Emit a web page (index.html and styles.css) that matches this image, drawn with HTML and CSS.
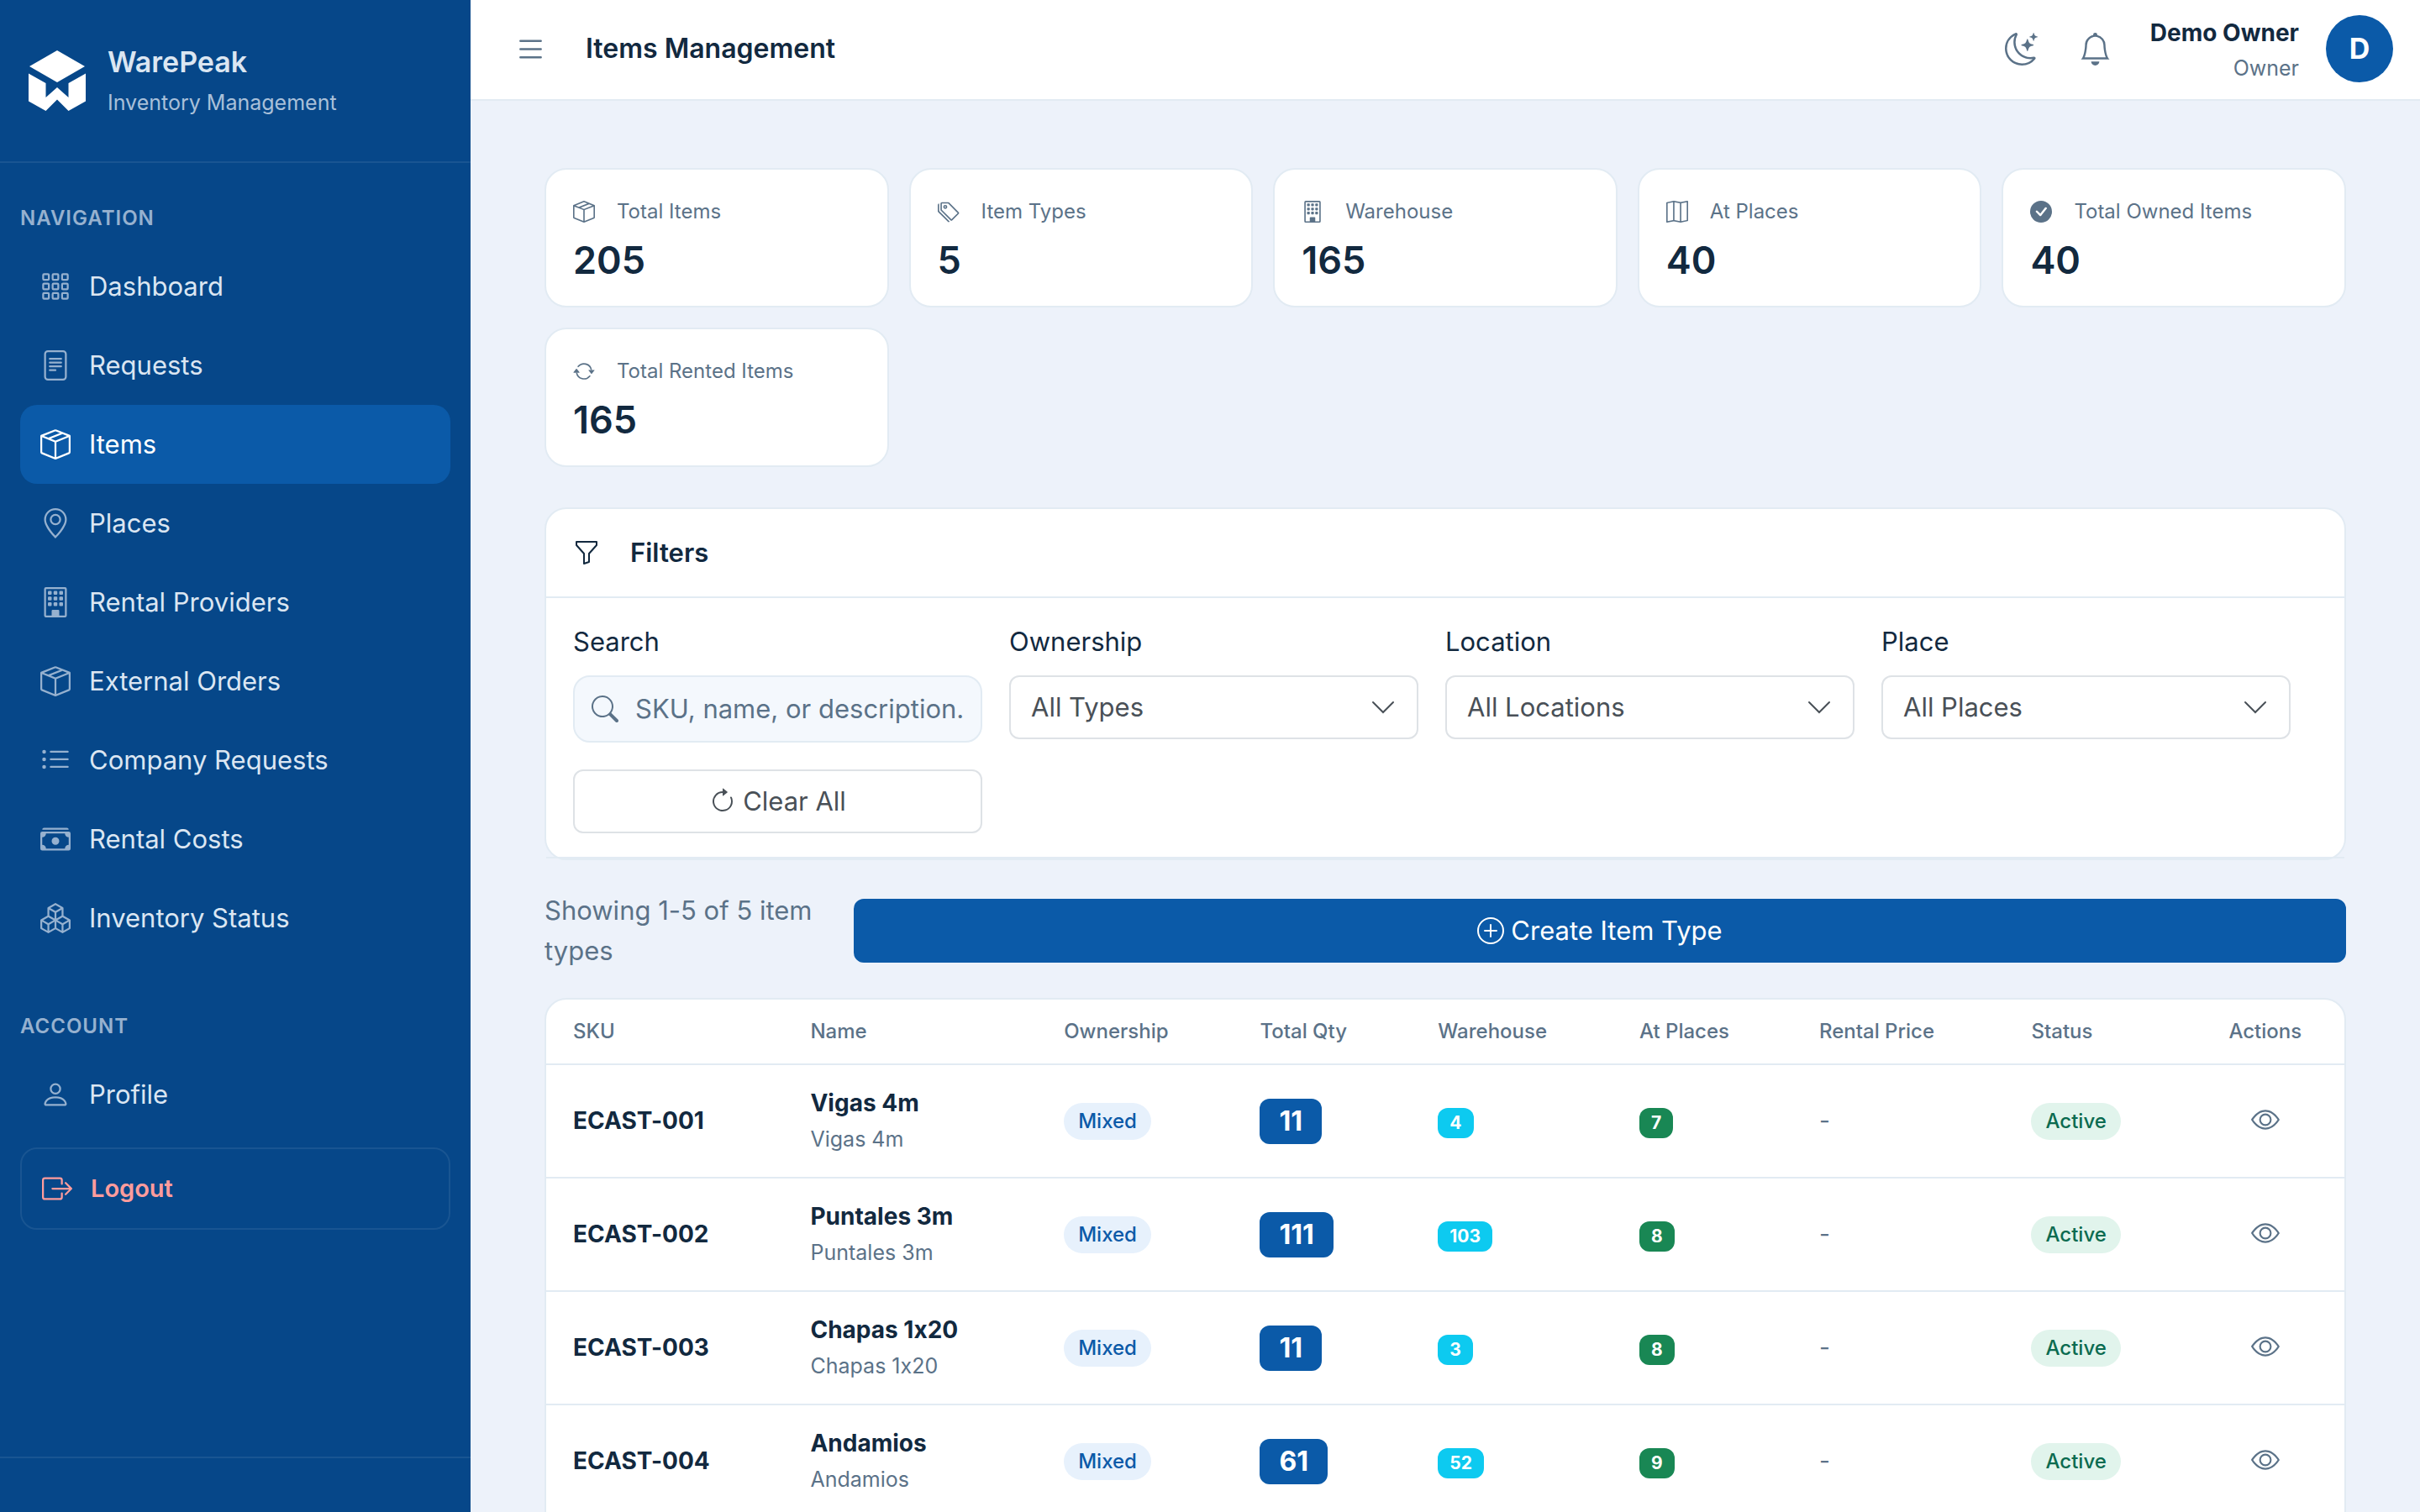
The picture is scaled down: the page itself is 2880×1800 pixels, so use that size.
FILE: index.html
```html
<!DOCTYPE html>
<html lang="en">
<head>
    <meta charset="UTF-8">
    <meta name="viewport" content="width=device-width, initial-scale=1">
    <title>WarePeak - Items Management</title>
    <link rel="stylesheet" href="styles.css">
</head>
<body>
    <!-- Icon sprite -->
    <svg class="sprite" aria-hidden="true">
        <symbol id="grid" viewBox="0 0 16 16">
            <g fill="none" stroke="currentColor">
                <rect x="1.5" y="1.5" width="3" height="3" rx=".5"/><rect x="6.5" y="1.5" width="3" height="3" rx=".5"/><rect x="11.5" y="1.5" width="3" height="3" rx=".5"/>
                <rect x="1.5" y="6.5" width="3" height="3" rx=".5"/><rect x="6.5" y="6.5" width="3" height="3" rx=".5"/><rect x="11.5" y="6.5" width="3" height="3" rx=".5"/>
                <rect x="1.5" y="11.5" width="3" height="3" rx=".5"/><rect x="6.5" y="11.5" width="3" height="3" rx=".5"/><rect x="11.5" y="11.5" width="3" height="3" rx=".5"/>
            </g>
        </symbol>
        <symbol id="file-text" viewBox="0 0 16 16">
            <path d="M5 4a.5.5 0 0 0 0 1h6a.5.5 0 0 0 0-1zm-.5 2.5A.5.5 0 0 1 5 6h6a.5.5 0 0 1 0 1H5a.5.5 0 0 1-.5-.5M5 8a.5.5 0 0 0 0 1h6a.5.5 0 0 0 0-1zm0 2a.5.5 0 0 0 0 1h3a.5.5 0 0 0 0-1z"/>
            <path d="M2 2a2 2 0 0 1 2-2h8a2 2 0 0 1 2 2v12a2 2 0 0 1-2 2H4a2 2 0 0 1-2-2zm10-1H4a1 1 0 0 0-1 1v12a1 1 0 0 0 1 1h8a1 1 0 0 0 1-1V2a1 1 0 0 0-1-1"/>
        </symbol>
        <symbol id="box" viewBox="0 0 16 16">
            <path d="M8.186 1.113a.5.5 0 0 0-.372 0L1.846 3.5l2.404.961L10.404 2zm3.564 1.426L5.596 5 8 5.961 14.154 3.5zm3.25 1.7-6.5 2.6v7.922l6.5-2.6V4.24zM7.5 14.762V6.838L1 4.239v7.923zM7.443.184a1.5 1.5 0 0 1 1.114 0l7.129 2.852A.5.5 0 0 1 16 3.5v8.662a1 1 0 0 1-.629.928l-7.185 2.874a.5.5 0 0 1-.372 0L.63 13.09a1 1 0 0 1-.63-.928V3.5a.5.5 0 0 1 .314-.464z"/>
        </symbol>
        <symbol id="geo" viewBox="0 0 16 16">
            <path d="M12.166 8.94c-.524 1.062-1.234 2.12-1.96 3.07A32 32 0 0 1 8 14.58a32 32 0 0 1-2.206-2.57c-.726-.95-1.436-2.008-1.96-3.07C3.304 7.867 3 6.862 3 6a5 5 0 0 1 10 0c0 .862-.305 1.867-.834 2.94M8 16s6-5.686 6-10A6 6 0 0 0 2 6c0 4.314 6 10 6 10"/>
            <path d="M8 8a2 2 0 1 1 0-4 2 2 0 0 1 0 4m0 1a3 3 0 1 0 0-6 3 3 0 0 0 0 6"/>
        </symbol>
        <symbol id="building" viewBox="0 0 16 16">
            <path d="M2 1a1 1 0 0 1 1-1h10a1 1 0 0 1 1 1v14a1 1 0 0 1-1 1H3a1 1 0 0 1-1-1zm11 0H3v14h3v-2.5a.5.5 0 0 1 .5-.5h3a.5.5 0 0 1 .5.5V15h3z"/>
            <rect x="4" y="2" width="2" height="2" rx=".5"/><rect x="7" y="2" width="2" height="2" rx=".5"/><rect x="10" y="2" width="2" height="2" rx=".5"/>
            <rect x="4" y="5" width="2" height="2" rx=".5"/><rect x="7" y="5" width="2" height="2" rx=".5"/><rect x="10" y="5" width="2" height="2" rx=".5"/>
            <rect x="4" y="8" width="2" height="2" rx=".5"/><rect x="7" y="8" width="2" height="2" rx=".5"/><rect x="10" y="8" width="2" height="2" rx=".5"/>
        </symbol>
        <symbol id="list-ul" viewBox="0 0 16 16">
            <path d="M5 11.5a.5.5 0 0 1 .5-.5h9a.5.5 0 0 1 0 1h-9a.5.5 0 0 1-.5-.5m0-4a.5.5 0 0 1 .5-.5h9a.5.5 0 0 1 0 1h-9a.5.5 0 0 1-.5-.5m0-4a.5.5 0 0 1 .5-.5h9a.5.5 0 0 1 0 1h-9a.5.5 0 0 1-.5-.5m-3 1a1 1 0 1 0 0-2 1 1 0 0 0 0 2m0 4a1 1 0 1 0 0-2 1 1 0 0 0 0 2m0 4a1 1 0 1 0 0-2 1 1 0 0 0 0 2"/>
        </symbol>
        <symbol id="cash" viewBox="0 0 16 16">
            <path d="M1 3a1 1 0 0 1 1-1h12a1 1 0 0 1 1 1zm7 8a2 2 0 1 0 0-4 2 2 0 0 0 0 4"/>
            <path d="M0 5a1 1 0 0 1 1-1h14a1 1 0 0 1 1 1v8a1 1 0 0 1-1 1H1a1 1 0 0 1-1-1zm3 0a2 2 0 0 1-2 2v4a2 2 0 0 1 2 2h10a2 2 0 0 1 2-2V7a2 2 0 0 1-2-2z"/>
        </symbol>
        <symbol id="boxes" viewBox="0 0 16 16">
            <path d="M7.752.066a.5.5 0 0 1 .496 0l3.75 2.143a.5.5 0 0 1 .252.434v3.995l3.498 2A.5.5 0 0 1 16 9.07v4.286a.5.5 0 0 1-.252.434l-3.75 2.143a.5.5 0 0 1-.496 0l-3.502-2-3.502 2.001a.5.5 0 0 1-.496 0l-3.75-2.143A.5.5 0 0 1 0 13.357V9.071a.5.5 0 0 1 .252-.434L3.75 6.638V2.643a.5.5 0 0 1 .252-.434zM4.25 7.504 1.508 9.071l2.742 1.567 2.742-1.567zM7.5 9.933l-2.75 1.571v3.134l2.75-1.571zm1 3.134 2.75 1.571v-3.134L8.5 9.933zm.508-3.996 2.742 1.567 2.742-1.567-2.742-1.567zm2.242-2.433V3.504L8.5 5.076V8.21zM7.5 8.21V5.076L4.75 3.504v3.134zM5.258 2.643 8 4.21l2.742-1.567L8 1.076zM15 9.933l-2.75 1.571v3.134L15 13.067zM3.75 14.638v-3.134L1 9.933v3.134z"/>
        </symbol>
        <symbol id="person" viewBox="0 0 16 16">
            <path d="M8 8a3 3 0 1 0 0-6 3 3 0 0 0 0 6m2-3a2 2 0 1 1-4 0 2 2 0 0 1 4 0m4 8c0 1-1 1-1 1H3s-1 0-1-1 1-4 6-4 6 3 6 4m-1-.004c-.001-.246-.154-.986-.832-1.664C11.516 10.68 10.289 10 8 10s-3.516.68-4.168 1.332c-.678.678-.83 1.418-.832 1.664z"/>
        </symbol>
        <symbol id="logout" viewBox="0 0 16 16">
            <path d="M10 12.5a.5.5 0 0 1-.5.5h-8a.5.5 0 0 1-.5-.5v-9a.5.5 0 0 1 .5-.5h8a.5.5 0 0 1 .5.5v2a.5.5 0 0 0 1 0v-2A1.5 1.5 0 0 0 9.5 2h-8A1.5 1.5 0 0 0 0 3.5v9A1.5 1.5 0 0 0 1.5 14h8a1.5 1.5 0 0 0 1.5-1.5v-2a.5.5 0 0 0-1 0z"/>
            <path d="M15.854 8.354a.5.5 0 0 0 0-.708l-3-3a.5.5 0 0 0-.708.708L14.293 7.5H5.5a.5.5 0 0 0 0 1h8.793l-2.147 2.146a.5.5 0 0 0 .708.708z"/>
        </symbol>
        <symbol id="list" viewBox="0 0 16 16">
            <path d="M2.5 12a.5.5 0 0 1 .5-.5h10a.5.5 0 0 1 0 1H3a.5.5 0 0 1-.5-.5m0-4a.5.5 0 0 1 .5-.5h10a.5.5 0 0 1 0 1H3a.5.5 0 0 1-.5-.5m0-4a.5.5 0 0 1 .5-.5h10a.5.5 0 0 1 0 1H3a.5.5 0 0 1-.5-.5"/>
        </symbol>
        <symbol id="moon" viewBox="0 0 16 16">
            <path d="M6 .278a.77.77 0 0 1 .08.858 7.2 7.2 0 0 0-.878 3.46c0 4.021 3.278 7.277 7.318 7.277q.792-.001 1.533-.16a.79.79 0 0 1 .81.316.73.73 0 0 1-.031.893A8.35 8.35 0 0 1 8.344 16C3.734 16 0 12.286 0 7.71 0 4.266 2.114 1.312 5.124.06A.75.75 0 0 1 6 .278M4.858 1.311A7.27 7.27 0 0 0 1.025 7.71c0 4.02 3.279 7.276 7.319 7.276a7.32 7.32 0 0 0 5.205-2.162q-.506.063-1.029.063c-4.61 0-8.343-3.714-8.343-8.29 0-1.167.242-2.278.681-3.286"/>
            <path d="M10.794 3.148a.217.217 0 0 1 .412 0l.387 1.162c.173.518.579.924 1.097 1.097l1.162.387a.217.217 0 0 1 0 .412l-1.162.387a1.73 1.73 0 0 0-1.097 1.097l-.387 1.162a.217.217 0 0 1-.412 0l-.387-1.162A1.73 1.73 0 0 0 9.31 6.593l-1.162-.387a.217.217 0 0 1 0-.412l1.162-.387a1.73 1.73 0 0 0 1.097-1.097zM13.863.099a.145.145 0 0 1 .274 0l.258.774c.115.346.386.617.732.732l.774.258a.145.145 0 0 1 0 .274l-.774.258a1.16 1.16 0 0 0-.732.732l-.258.774a.145.145 0 0 1-.274 0l-.258-.774a1.16 1.16 0 0 0-.732-.732l-.774-.258a.145.145 0 0 1 0-.274l.774-.258c.346-.115.617-.386.732-.732z"/>
        </symbol>
        <symbol id="bell" viewBox="0 0 16 16">
            <path d="M8 16a2 2 0 0 0 2-2H6a2 2 0 0 0 2 2M8 1.918l-.797.161A4 4 0 0 0 4 6c0 .628-.134 2.197-.459 3.742-.16.767-.376 1.566-.663 2.258h10.244c-.287-.692-.502-1.49-.663-2.258C12.134 8.197 12 6.628 12 6a4 4 0 0 0-3.203-3.92zM14.22 12c.223.447.481.801.78 1H1c.299-.199.557-.553.78-1C2.68 10.2 3 6.88 3 6c0-2.42 1.72-4.44 4.005-4.901a1 1 0 1 1 1.99 0A5 5 0 0 1 13 6c0 .88.32 4.2 1.22 6"/>
        </symbol>
        <symbol id="tags" viewBox="0 0 16 16">
            <path d="M3 2v4.586l7 7L14.586 9l-7-7zM2 2a1 1 0 0 1 1-1h4.586a1 1 0 0 1 .707.293l7 7a1 1 0 0 1 0 1.414l-4.586 4.586a1 1 0 0 1-1.414 0l-7-7A1 1 0 0 1 2 6.586z"/>
            <path d="M5.5 5a.5.5 0 1 1 0-1 .5.5 0 0 1 0 1m0 1a1.5 1.5 0 1 0 0-3 1.5 1.5 0 0 0 0 3M1 7.086a1 1 0 0 0 .293.707L8.75 15.25l-.043.043a1 1 0 0 1-1.414 0l-7-7A1 1 0 0 1 0 7.586V3a1 1 0 0 1 1-1z"/>
        </symbol>
        <symbol id="map" viewBox="0 0 16 16">
            <path d="M15.817.113A.5.5 0 0 1 16 .5v14a.5.5 0 0 1-.402.49l-5 1a.5.5 0 0 1-.196 0L5.5 15.01l-4.902.98A.5.5 0 0 1 0 15.5v-14a.5.5 0 0 1 .402-.49l5-1a.5.5 0 0 1 .196 0L10.5.99l4.902-.98a.5.5 0 0 1 .415.103M10 1.91l-4-.8v12.98l4 .8zm1 12.98 4-.8V1.11l-4 .8zm-6-.8V1.11l-4 .8v12.98z"/>
        </symbol>
        <symbol id="check" viewBox="0 0 16 16">
            <path d="M16 8A8 8 0 1 1 0 8a8 8 0 0 1 16 0m-3.97-3.03a.75.75 0 0 0-1.08.022L7.477 9.417 5.384 7.323a.75.75 0 0 0-1.06 1.06L6.97 11.03a.75.75 0 0 0 1.079-.02l3.992-4.99a.75.75 0 0 0-.01-1.05z"/>
        </symbol>
        <symbol id="repeat" viewBox="0 0 16 16">
            <path d="M11.534 7h3.932a.25.25 0 0 1 .192.41l-1.966 2.36a.25.25 0 0 1-.384 0l-1.966-2.36a.25.25 0 0 1 .192-.41m-11 2h3.932a.25.25 0 0 0 .192-.41L2.692 6.23a.25.25 0 0 0-.384 0L.342 8.59A.25.25 0 0 0 .534 9"/>
            <path d="M8 3c-1.552 0-2.94.707-3.857 1.818a.5.5 0 1 1-.771-.636A6.002 6.002 0 0 1 13.917 7H12.9A5 5 0 0 0 8 3M3.1 9a5.002 5.002 0 0 0 8.757 2.182.5.5 0 1 1 .771.636A6.002 6.002 0 0 1 2.083 9z"/>
        </symbol>
        <symbol id="funnel" viewBox="0 0 16 16">
            <path d="M1.5 1.5A.5.5 0 0 1 2 1h12a.5.5 0 0 1 .5.5v2a.5.5 0 0 1-.128.334L10 8.692V13.5a.5.5 0 0 1-.342.474l-3 1A.5.5 0 0 1 6 14.5V8.692L1.628 3.834A.5.5 0 0 1 1.5 3.5zm1 .5v1.308l4.372 4.858A.5.5 0 0 1 7 8.5v5.306l2-.666V8.5a.5.5 0 0 1 .128-.334L13.5 3.308V2z"/>
        </symbol>
        <symbol id="search-icon" viewBox="0 0 16 16">
            <path d="M11.742 10.344a6.5 6.5 0 1 0-1.397 1.398h-.001q.044.06.098.115l3.85 3.85a1 1 0 0 0 1.415-1.414l-3.85-3.85a1 1 0 0 0-.115-.1zM12 6.5a5.5 5.5 0 1 1-11 0 5.5 5.5 0 0 1 11 0"/>
        </symbol>
        <symbol id="reset" viewBox="0 0 16 16">
            <path d="M8 3a5 5 0 1 0 4.546 2.914.5.5 0 0 1 .908-.417A6 6 0 1 1 8 2z"/>
            <path d="M8 4.466V.534a.25.25 0 0 1 .41-.192l2.36 1.966c.12.1.12.284 0 .384L8.41 4.658A.25.25 0 0 1 8 4.466"/>
        </symbol>
        <symbol id="plus" viewBox="0 0 16 16">
            <path d="M8 15A7 7 0 1 1 8 1a7 7 0 0 1 0 14m0 1A8 8 0 1 0 8 0a8 8 0 0 0 0 16"/>
            <path d="M8 4a.5.5 0 0 1 .5.5v3h3a.5.5 0 0 1 0 1h-3v3a.5.5 0 0 1-1 0v-3h-3a.5.5 0 0 1 0-1h3v-3A.5.5 0 0 1 8 4"/>
        </symbol>
        <symbol id="eye" viewBox="0 0 16 16">
            <path d="M16 8s-3-5.5-8-5.5S0 8 0 8s3 5.5 8 5.5S16 8 16 8M1.173 8a13 13 0 0 1 1.66-2.043C4.12 4.668 5.88 3.5 8 3.5s3.879 1.168 5.168 2.457A13 13 0 0 1 14.828 8q-.086.13-.195.288c-.335.48-.83 1.12-1.465 1.755C11.879 11.332 10.119 12.5 8 12.5s-3.879-1.168-5.168-2.457A13 13 0 0 1 1.172 8z"/>
            <path d="M8 5.5a2.5 2.5 0 1 0 0 5 2.5 2.5 0 0 0 0-5M4.5 8a3.5 3.5 0 1 1 7 0 3.5 3.5 0 0 1-7 0"/>
        </symbol>
    </svg>

    <div class="layout">
        <aside class="sidebar">
            <div class="brand">
                <svg class="brand-logo" viewBox="0 0 68 72" aria-hidden="true">
                    <path d="M34 0 67 19 34 38 1 19z"/>
                    <path d="M0 27.5 20.5 39v17L34 44l13.5 12V39L68 27.5v33L47.5 72 34 58.5 20.5 72 0 60.5z"/>
                </svg>
                <div class="brand-text">
                    <div class="brand-name">WarePeak</div>
                    <div class="brand-sub">Inventory Management</div>
                </div>
            </div>
            <nav class="sidebar-nav">
                <div class="nav-title">NAVIGATION</div>
                <a class="nav-link" href="#"><svg class="icon"><use href="#grid"/></svg>Dashboard</a>
                <a class="nav-link" href="#"><svg class="icon"><use href="#file-text"/></svg>Requests</a>
                <a class="nav-link active" href="#"><svg class="icon"><use href="#box"/></svg>Items</a>
                <a class="nav-link" href="#"><svg class="icon"><use href="#geo"/></svg>Places</a>
                <a class="nav-link" href="#"><svg class="icon"><use href="#building"/></svg>Rental Providers</a>
                <a class="nav-link" href="#"><svg class="icon"><use href="#box"/></svg>External Orders</a>
                <a class="nav-link" href="#"><svg class="icon"><use href="#list-ul"/></svg>Company Requests</a>
                <a class="nav-link" href="#"><svg class="icon"><use href="#cash"/></svg>Rental Costs</a>
                <a class="nav-link" href="#"><svg class="icon"><use href="#boxes"/></svg>Inventory Status</a>
                <div class="nav-title account">ACCOUNT</div>
                <a class="nav-link" href="#"><svg class="icon"><use href="#person"/></svg>Profile</a>
                <button class="logout" type="button"><svg class="icon"><use href="#logout"/></svg>Logout</button>
            </nav>
            <div class="sidebar-footer"></div>
        </aside>

        <div class="main">
            <header class="topbar">
                <button class="icon-btn" type="button" aria-label="Toggle sidebar"><svg class="icon"><use href="#list"/></svg></button>
                <h1 class="page-title">Items Management</h1>
                <div class="topbar-actions">
                    <button class="icon-btn" type="button" aria-label="Dark mode"><svg class="icon"><use href="#moon"/></svg></button>
                    <button class="icon-btn" type="button" aria-label="Notifications"><svg class="icon"><use href="#bell"/></svg></button>
                </div>
                <div class="user">
                    <div class="user-name">Demo Owner</div>
                    <div class="user-role">Owner</div>
                </div>
                <div class="avatar">D</div>
            </header>

            <main class="content">
                <section class="stats">
                    <div class="stat"><div class="stat-label"><svg class="icon"><use href="#box"/></svg>Total Items</div><div class="stat-value">205</div></div>
                    <div class="stat"><div class="stat-label"><svg class="icon"><use href="#tags"/></svg>Item Types</div><div class="stat-value">5</div></div>
                    <div class="stat"><div class="stat-label"><svg class="icon"><use href="#building"/></svg>Warehouse</div><div class="stat-value">165</div></div>
                    <div class="stat"><div class="stat-label"><svg class="icon"><use href="#map"/></svg>At Places</div><div class="stat-value">40</div></div>
                    <div class="stat"><div class="stat-label"><svg class="icon"><use href="#check"/></svg>Total Owned Items</div><div class="stat-value">40</div></div>
                    <div class="stat"><div class="stat-label"><svg class="icon"><use href="#repeat"/></svg>Total Rented Items</div><div class="stat-value">165</div></div>
                </section>

                <section class="card filters">
                    <h2 class="filters-header"><svg class="icon"><use href="#funnel"/></svg>Filters</h2>
                    <form class="filters-body">
                        <div class="field">
                            <label for="search">Search</label>
                            <div class="search-box">
                                <svg class="icon"><use href="#search-icon"/></svg>
                                <input type="text" id="search" name="search" placeholder="SKU, name, or description...">
                            </div>
                        </div>
                        <div class="field">
                            <label for="ownership">Ownership</label>
                            <select id="ownership" name="ownership"><option>All Types</option></select>
                        </div>
                        <div class="field">
                            <label for="location">Location</label>
                            <select id="location" name="location"><option>All Locations</option></select>
                        </div>
                        <div class="field">
                            <label for="place">Place</label>
                            <select id="place" name="place"><option>All Places</option></select>
                        </div>
                        <button class="btn btn-outline" type="reset"><svg class="icon"><use href="#reset"/></svg>Clear All</button>
                    </form>
                </section>

                <div class="toolbar">
                    <p class="showing">Showing 1-5 of 5 item types</p>
                    <button class="btn btn-primary" type="button"><svg class="icon"><use href="#plus"/></svg>Create Item Type</button>
                </div>

                <section class="card table-card">
                    <table class="items">
                        <colgroup>
                            <col class="c-sku"><col class="c-name"><col class="c-own"><col class="c-qty"><col class="c-wh"><col class="c-places"><col class="c-price"><col class="c-status"><col class="c-actions">
                        </colgroup>
                        <thead>
                            <tr>
                                <th>SKU</th>
                                <th>Name</th>
                                <th>Ownership</th>
                                <th>Total Qty</th>
                                <th>Warehouse</th>
                                <th>At Places</th>
                                <th>Rental Price</th>
                                <th>Status</th>
                                <th class="center">Actions</th>
                            </tr>
                        </thead>
                        <tbody>
                            <tr>
                                <td class="sku">ECAST-001</td>
                                <td><div class="name">Vigas 4m</div><div class="desc">Vigas 4m</div></td>
                                <td><span class="pill pill-mixed">Mixed</span></td>
                                <td><span class="badge badge-qty">11</span></td>
                                <td><span class="badge badge-wh">4</span></td>
                                <td><span class="badge badge-places">7</span></td>
                                <td class="price">-</td>
                                <td><span class="pill pill-active">Active</span></td>
                                <td class="center"><button class="view" type="button" aria-label="View"><svg class="icon"><use href="#eye"/></svg></button></td>
                            </tr>
                            <tr>
                                <td class="sku">ECAST-002</td>
                                <td><div class="name">Puntales 3m</div><div class="desc">Puntales 3m</div></td>
                                <td><span class="pill pill-mixed">Mixed</span></td>
                                <td><span class="badge badge-qty">111</span></td>
                                <td><span class="badge badge-wh">103</span></td>
                                <td><span class="badge badge-places">8</span></td>
                                <td class="price">-</td>
                                <td><span class="pill pill-active">Active</span></td>
                                <td class="center"><button class="view" type="button" aria-label="View"><svg class="icon"><use href="#eye"/></svg></button></td>
                            </tr>
                            <tr>
                                <td class="sku">ECAST-003</td>
                                <td><div class="name">Chapas 1x20</div><div class="desc">Chapas 1x20</div></td>
                                <td><span class="pill pill-mixed">Mixed</span></td>
                                <td><span class="badge badge-qty">11</span></td>
                                <td><span class="badge badge-wh">3</span></td>
                                <td><span class="badge badge-places">8</span></td>
                                <td class="price">-</td>
                                <td><span class="pill pill-active">Active</span></td>
                                <td class="center"><button class="view" type="button" aria-label="View"><svg class="icon"><use href="#eye"/></svg></button></td>
                            </tr>
                            <tr>
                                <td class="sku">ECAST-004</td>
                                <td><div class="name">Andamios</div><div class="desc">Andamios</div></td>
                                <td><span class="pill pill-mixed">Mixed</span></td>
                                <td><span class="badge badge-qty">61</span></td>
                                <td><span class="badge badge-wh">52</span></td>
                                <td><span class="badge badge-places">9</span></td>
                                <td class="price">-</td>
                                <td><span class="pill pill-active">Active</span></td>
                                <td class="center"><button class="view" type="button" aria-label="View"><svg class="icon"><use href="#eye"/></svg></button></td>
                            </tr>
                        </tbody>
                    </table>
                </section>
            </main>
        </div>
    </div>
</body>
</html>
```

FILE: styles.css
```css
:root {
    --sidebar: #064789;
    --primary: #0b5aa8;
    --bg: #edf2fa;
    --border: #e2ebf3;
    --text: #12293f;
    --muted: #5b7288;
}
* {
    box-sizing: border-box;
}
body {
    margin: 0;
    font-family: Inter, "Liberation Sans", sans-serif;
    font-size: 31px;
    line-height: 48px;
    font-variant-ligatures: no-contextual;
    color: var(--text);
    background-color: var(--bg);
}
button, input, select {
    font: inherit;
    color: inherit;
}
button {
    cursor: pointer;
}
h1, h2, p {
    margin: 0;
}
.sprite {
    display: none;
}
.icon {
    width: 32px;
    height: 32px;
    flex-shrink: 0;
    fill: currentColor;
}
.layout {
    display: flex;
    height: 100vh;
    overflow: hidden;
}

/* Sidebar */
.sidebar {
    display: flex;
    flex-direction: column;
    width: 560px;
    flex-shrink: 0;
    background-color: var(--sidebar);
    color: #dbe6f2;
}
.brand {
    display: flex;
    align-items: center;
    gap: 26px;
    height: 194px;
    padding: 0 34px;
    border-bottom: 2px solid rgba(255, 255, 255, 0.08);
}
.brand-logo {
    width: 68px;
    height: 72px;
    fill: #fff;
}
.brand-text {
    padding-top: 4px;
}
.brand-name {
    font-size: 34px;
    font-weight: 600;
}
.brand-sub {
    font-size: 25px;
    color: #a9c0d9;
}
.sidebar-nav {
    flex: 1;
    padding: 48px 24px 0;
}
.nav-title {
    margin-bottom: 17px;
    font-size: 24px;
    line-height: 35px;
    font-weight: 600;
    letter-spacing: 1px;
    color: #96b1cf;
}
.nav-title.account {
    margin-top: 64px;
}
.nav-link {
    display: flex;
    align-items: center;
    gap: 22px;
    height: 94px;
    padding: 0 24px;
    border-radius: 20px;
    color: #dbe6f2;
    text-decoration: none;
}
.nav-link .icon,
.logout .icon {
    width: 36px;
    height: 36px;
}
.nav-link .icon {
    color: #96b1cf;
}
.nav-link.active,
.nav-link.active .icon {
    color: #fff;
}
.nav-link.active {
    background-color: var(--primary);
}
.logout {
    display: flex;
    align-items: center;
    gap: 22px;
    width: 100%;
    height: 98px;
    margin-top: 16px;
    padding: 0 24px;
    border: 2px solid rgba(255, 255, 255, 0.08);
    border-radius: 20px;
    background: none;
    font-size: 29px;
    font-weight: 600;
    color: #ff9c9c;
}
.sidebar-footer {
    height: 66px;
    border-top: 2px solid rgba(255, 255, 255, 0.08);
}

/* Top bar */
.main {
    flex: 1;
    min-width: 0;
}
.topbar {
    display: flex;
    align-items: center;
    height: 120px;
    padding: 0 32px 2px 38px;
    border-bottom: 2px solid var(--border);
    background-color: #fff;
}
.icon-btn {
    display: flex;
    padding: 14px;
    border: 0;
    background: none;
    color: var(--muted);
}
.icon-btn .icon {
    width: 39px;
    height: 39px;
}
.page-title {
    margin-left: 32px;
    font-size: 32px;
    font-weight: 600;
}
.topbar-actions {
    display: flex;
    gap: 21px;
    margin-left: auto;
}
.user {
    margin-left: 32px;
    padding-top: 4px;
    line-height: 42px;
    text-align: right;
}
.user-name {
    font-size: 28px;
    font-weight: 700;
}
.user-role {
    font-size: 25px;
    color: var(--muted);
}
.avatar {
    width: 80px;
    height: 80px;
    margin-left: 32px;
    border-radius: 50%;
    background-color: var(--primary);
    color: #fff;
    font-size: 34px;
    line-height: 80px;
    font-weight: 700;
    text-align: center;
}

/* Content */
.content {
    padding: 80px 88px;
}
.stats {
    display: grid;
    grid-template-columns: repeat(5, 1fr);
    gap: 24px;
}
.stat {
    height: 166px;
    padding: 26px 32px;
    border: 2px solid var(--border);
    border-radius: 26px;
    background-color: #fff;
}
.stat-label {
    display: flex;
    align-items: center;
    gap: 26px;
    font-size: 24px;
    line-height: 48px;
    color: var(--muted);
}
.stat-label .icon {
    width: 26px;
    height: 26px;
}
.stat-value {
    font-size: 45px;
    line-height: 68px;
    font-weight: 600;
}
.card {
    border: 2px solid var(--border);
    border-radius: 26px;
    background-color: #fff;
}
.filters {
    margin-top: 48px;
}
.filters-header {
    display: flex;
    align-items: center;
    gap: 36px;
    padding: 28px 32px;
    border-bottom: 2px solid var(--border);
    font-size: 31px;
    font-weight: 600;
}
.filters-body {
    display: grid;
    grid-template-columns: repeat(4, 1fr);
    gap: 32px;
    padding: 28px 64px 28px 32px;
    border-bottom: 2px solid var(--border);
}
.field label {
    display: block;
    margin-bottom: 16px;
}
.search-box {
    display: flex;
    align-items: center;
    gap: 20px;
    height: 80px;
    padding: 0 20px;
    border: 2px solid var(--border);
    border-radius: 20px;
    background-color: #f4f8fd;
    color: var(--muted);
}
.search-box input {
    width: 100%;
    padding: 0;
    border: 0;
    outline: 0;
    background: none;
}
.search-box input::placeholder {
    color: var(--muted);
    opacity: 1;
}
.field select {
    display: block;
    width: 100%;
    height: 76px;
    padding: 0 72px 0 24px;
    border: 2px solid #dee2e6;
    border-radius: 12px;
    appearance: none;
    background: #fff url("data:image/svg+xml,%3csvg xmlns='http://www.w3.org/2000/svg' viewBox='0 0 16 16'%3e%3cpath fill='none' stroke='%23495057' stroke-linecap='round' d='m2 5 6 6 6-6'/%3e%3c/svg%3e") no-repeat right 24px center / 32px 32px;
    color: #495057;
}
.btn {
    display: flex;
    align-items: center;
    justify-content: center;
    gap: 8px;
    height: 76px;
    border: 2px solid #dee2e6;
    border-radius: 12px;
}
.btn-outline {
    background-color: #fff;
    color: #495057;
}
.btn-primary {
    flex: 1;
    border-color: var(--primary);
    background-color: var(--primary);
    color: #fff;
}
.toolbar {
    display: flex;
    align-items: center;
    gap: 32px;
    margin: 36px 0 32px;
}
.showing {
    width: 336px;
    color: var(--muted);
}

/* Table */
.table-card {
    padding-bottom: 80px;
}
.items {
    width: 100%;
    table-layout: fixed;
    border-collapse: separate;
    border-spacing: 0;
}
.c-sku { width: 13.2%; }
.c-name { width: 14.1%; }
.c-own { width: 10.9%; }
.c-qty { width: 9.9%; }
.c-wh { width: 11.2%; }
.c-places { width: 10%; }
.c-price { width: 11.8%; }
.c-status { width: 10.1%; }
.c-actions { width: 8.8%; }
.items th {
    height: 78px;
    padding: 0 32px;
    border-bottom: 2px solid var(--border);
    font-size: 24px;
    font-weight: 500;
    text-align: left;
    color: var(--muted);
}
.items td {
    height: 135px;
    padding: 0 32px;
    border-bottom: 2px solid var(--border);
    vertical-align: middle;
    font-size: 28px;
    line-height: 43px;
}
.items .center {
    padding: 0;
    text-align: center;
}
.items .sku,
.name {
    font-weight: 700;
}
.desc {
    font-size: 25px;
    color: var(--muted);
}
.price {
    color: var(--muted);
}
.pill {
    display: inline-block;
    padding: 0 17px;
    border-radius: 22px;
    font-size: 24px;
    line-height: 44px;
    font-weight: 500;
    vertical-align: middle;
}
.pill-mixed {
    background-color: #e7f1fc;
    color: #0b5aa8;
}
.pill-active {
    background-color: #e1f4ec;
    color: #0b6b50;
}
.badge {
    display: inline-block;
    padding: 0 14px;
    border-radius: 12px;
    font-size: 21px;
    line-height: 36px;
    font-weight: 700;
    color: #fff;
}
.badge-qty {
    padding: 0 23px;
    font-size: 32px;
    line-height: 54px;
    vertical-align: middle;
    background-color: var(--primary);
}
.badge-wh {
    background-color: #0dcaf0;
}
.badge-places {
    background-color: #198754;
}
.view {
    padding: 0 0 6px;
    border: 0;
    background: none;
    color: var(--muted);
}
.view .icon {
    width: 34px;
    height: 34px;
    vertical-align: middle;
}
```
